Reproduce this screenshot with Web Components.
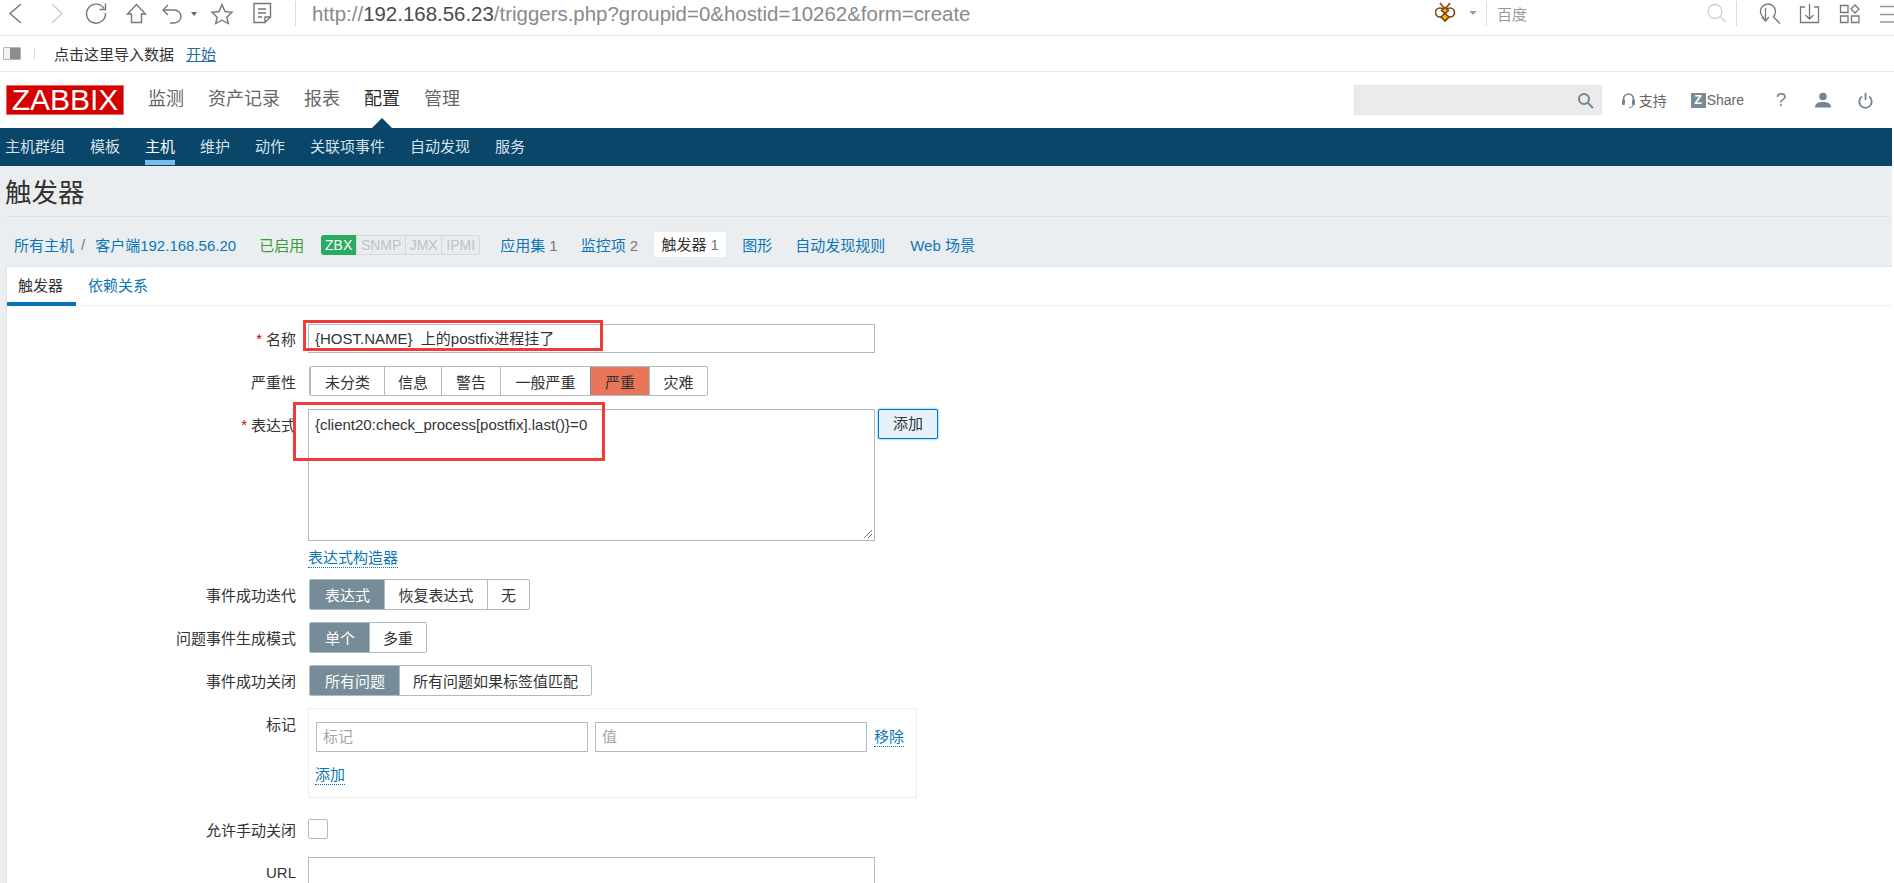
<!DOCTYPE html>
<html lang="zh">
<head>
<meta charset="utf-8">
<title>触发器</title>
<style>
    html, body { margin: 0; height: 883px; overflow: hidden; background: #fff; }
    body { font-family: "Liberation Sans", "Noto Sans CJK SC", sans-serif; font-size: 15px; color: #333; }
</style>
</head>
<body>
<browser-bar url-host="192.168.56.23" url-rest="/triggers.php?groupid=0&amp;hostid=10262&amp;form=create"></browser-bar>
<bookmark-bar></bookmark-bar>
<zbx-header></zbx-header>
<zbx-subnav></zbx-subnav>
<zbx-page>
    <h-title slot="title">触发器</h-title>
    <host-crumbs slot="crumbs"></host-crumbs>
    <zbx-panel slot="panel">
        <form-row label="名称" required top="0" height="29">
            <text-field width="567" height="29" value="{HOST.NAME}  上的postfix进程挂了"></text-field>
            <red-box left="-5" top="-4" width="300" height="31"></red-box>
        </form-row>
        <form-row label="严重性" top="13" height="30">
            <seg-group items="未分类:74,信息:57,警告:59,一般严重:90,严重:59,灾难:58" active="严重" hot></seg-group>
        </form-row>
        <form-row label="表达式" required top="13" height="132" align-top>
            <div style="display:flex;gap:3px;align-items:flex-start">
                <text-area-box width="567" height="132">{client20:check_process[postfix].last()}=0</text-area-box>
                <add-button>添加</add-button>
            </div>
            <red-box left="-15" top="-7" width="312" height="59"></red-box>
        </form-row>
        <form-row top="7" height="21"><dot-link>表达式构造器</dot-link></form-row>
        <form-row label="事件成功迭代" top="10" height="31">
            <seg-group items="表达式:74,恢复表达式:103,无:42" active="表达式"></seg-group>
        </form-row>
        <form-row label="问题事件生成模式" top="12" height="31">
            <seg-group items="单个:59,多重:57" active="单个"></seg-group>
        </form-row>
        <form-row label="事件成功关闭" top="12" height="31">
            <seg-group items="所有问题:89,所有问题如果标签值匹配:192" active="所有问题"></seg-group>
        </form-row>
        <form-row label="标记" top="12" height="90" align-top>
            <tag-box></tag-box>
        </form-row>
        <form-row label="允许手动关闭" top="21" height="20">
            <check-box></check-box>
        </form-row>
        <form-row label="URL" top="18" height="30">
            <text-field width="567" height="30" value=""></text-field>
        </form-row>
    </zbx-panel>
</zbx-page>

<script>
class BrowserBar extends HTMLElement {
    constructor() {
        super();
        this.attachShadow({ mode: 'open' });
    }

    connectedCallback() {
        const host = this.getAttribute('url-host');
        const rest = this.getAttribute('url-rest').replace(/&/g, '&amp;');
        this.shadowRoot.innerHTML = `
            <style>
                :host { display: flex; height: 36px; box-sizing: border-box; border-bottom: 1px solid #e6e6e6; align-items: flex-start; }
                svg { display: block; flex: none; }
                .url { margin: 2px 0 0 16px; font-size: 20.45px; line-height: 24px; color: #8a8a8a; white-space: nowrap; }
                .url b { font-weight: normal; color: #4a4a4a; }
                .baidu { margin: 5px 0 0 10px; width: 209px; font-size: 15px; line-height: 20px; color: #999; }
                .sep { flex: none; width: 1px; height: 25px; margin-top: 1px; background: #dcdcdc; }
                .right { margin-left: auto; display: flex; align-items: flex-start; }
            </style>
            <svg width="295" height="35" viewBox="0 0 295 35" fill="none" stroke="#777" stroke-width="1.4">
                <path d="M21 4 10 13.500 21 23"/>
                <path d="M52 4 62 13.500 52 23" stroke="#ccc"/>
                <path d="M104 8.500A9.500 9.500 0 1 0 105.500 13"/>
                <path d="M105.500 3.500V9.500H99.500"/>
                <path d="M136.500 4.500 127.500 14H131.500V22.500H141.500V14H145.500Z"/>
                <path d="M163 10H174A7 6.500 0 0 1 174 23H170"/>
                <path d="M168 5 163 10 168 15"/>
                <path d="M191 12H197L194 16Z" fill="#666" stroke="none"/>
                <path d="M222 4.500 225 11.500 232 12.300 226.800 17.200 228.300 23.500 222 20.200 215.700 23.500 217.200 17.200 212 12.300 219 11.500Z"/>
                <path d="M254 3.500H270.500V17L265 22.500H254Z"/>
                <path d="M270.500 17H265V22.500M258 9H266M258 13H266M258 17H262"/>
            </svg>
            <div class="sep"></div>
            <div class="url">http://<b>${host}</b>${rest}</div>
            <div class="right">
                <svg width="46" height="35" viewBox="0 0 46 35" style="margin-right:5px">
                    <g stroke="#7a4310" stroke-width="1.600">
                        <path d="M5 3 9 8M15 3 11 8" fill="none"/>
                        <ellipse cx="5" cy="12.500" rx="4.500" ry="4.500" fill="#fff"/>
                        <ellipse cx="15" cy="12.500" rx="4.500" ry="4.500" fill="#fff"/>
                        <path d="M10 7.500 13.500 10.500 10 13.500 6.500 10.500Z" fill="#f2b50f"/>
                        <path d="M10 13.500 14 17 10 21 6 17Z" fill="#f2b50f"/>
                    </g>
                    <path d="M34.500 11H41.500L38 15Z" fill="#999"/>
                </svg>
                <div class="sep"></div>
                <div class="baidu">百度</div>
                <svg width="22" height="35" viewBox="0 0 22 35" fill="none" stroke="#d0d0d0" stroke-width="1.3" style="margin-right:8px">
                    <circle cx="9" cy="11.500" r="7"/><path d="M14 16.500 20 22"/>
                </svg>
                <div class="sep"></div>
                <svg width="157" height="35" viewBox="0 0 157 35" fill="none" stroke="#777" stroke-width="1.3">
                    <path d="M27.250 18A7.500 7.500 0 1 1 36.300 16.800L43 23.500"/>
                    <path d="M28.500 8V21M25 17 28.500 21 32 17"/>
                    <path d="M68 7H63.500V22.500H81.500V7H77M72.500 4V19M68.500 15 72.500 19 76.500 15"/>
                    <path d="M103.500 5.500H111V12.500H103.500ZM103.500 16H111V22.500H103.500ZM114.500 16H122V22.500H114.500ZM118 5 122 9 118 13 114 9Z"/>
                    <path d="M143 6.500H160M143 14.500H160M143 22H160" stroke="#999"/>
                </svg>
            </div>
        `;
    }
}
customElements.define('browser-bar', BrowserBar);

class BookmarkBar extends HTMLElement {
    constructor() {
        super();
        this.attachShadow({ mode: 'open' });
        this.shadowRoot.innerHTML = `
            <style>
                :host { display: flex; align-items: center; height: 36px; box-sizing: border-box; border-bottom: 1px solid #e6e6e6; font-size: 15px; color: #333; }
                .toggle { width: 18px; height: 13px; margin-left: 3px; background: linear-gradient(90deg, #f2f2f2 0 38%, #8c8c8c 38%); border: 1px solid #b5b5b5; box-sizing: border-box; border-radius: 1px; }
                .sep { width: 1px; height: 12px; margin: 0 19px 0 13px; background: #ddd; }
                a { margin-left: 12px; color: #2a6aa8; text-decoration: underline; }
            </style>
            <div class="toggle"></div>
            <div class="sep"></div>
            <span>点击这里导入数据</span>
            <a>开始</a>
        `;
    }
}
customElements.define('bookmark-bar', BookmarkBar);

class ZbxHeader extends HTMLElement {
    constructor() {
        super();
        this.attachShadow({ mode: 'open' });
        this.shadowRoot.innerHTML = `
            <style>
                :host { display: flex; align-items: center; height: 56px; padding-left: 6px; margin-right: 2px; }
                .logo { width: 118px; height: 30px; box-sizing: border-box; background: #d40000; color: #fff; border: 1px solid #e66; font-size: 30px; line-height: 28px; text-align: center; }
                nav { display: flex; gap: 24px; margin: -2px 0 0 24px; font-size: 18px; line-height: 24px; color: #666; }
                nav span { position: relative; }
                nav .on { color: #2b2b2b; }
                nav .on::after { content: ''; position: absolute; left: 50%; margin-left: -10px; top: 31px; border: 10px solid transparent; border-top: 0; border-bottom-color: #0a466a; }
                .tools { margin-left: auto; display: flex; align-items: center; color: #666; font-size: 14px; }
                .search { width: 248px; height: 30px; box-sizing: border-box; background: #ebebeb; border: 1px solid #e4e4e4; display: flex; justify-content: flex-end; align-items: center; padding-right: 7px; margin-right: 20px; }
                svg { display: block; flex: none; }
                .item { display: flex; align-items: center; }
                .z { width: 15px; height: 15px; background: #768d99; color: #fff; font-weight: bold; font-size: 12.500px; line-height: 15px; text-align: center; margin-right: 1px; }
                .help { width: 16px; justify-content: center; font-size: 19px; color: #6f8693; }
            </style>
            <div class="logo">ZABBIX</div>
            <nav>
                <span>监测</span><span>资产记录</span><span>报表</span><span class="on">配置</span><span>管理</span>
            </nav>
            <div class="tools">
                <div class="search">
                    <svg width="17" height="17" viewBox="0 0 17 17" fill="none" stroke="#6f8693" stroke-width="2"><circle cx="7" cy="7" r="5"/><path d="M11 11 16 16"/></svg>
                </div>
                <div class="item" style="margin-right:24px">
                    <svg width="13" height="15" viewBox="0 0 13 15" fill="none" stroke="#6f8693" stroke-width="1.500" style="margin-right:4px"><path d="M1.500 8V6A5 5 0 0 1 11.500 6V8"/><rect x="0" y="6.500" width="3" height="5.500" rx="1" fill="#6f8693" stroke="none"/><rect x="10" y="6.500" width="3" height="5.500" rx="1" fill="#6f8693" stroke="none"/><path d="M11 12C11 14 9.500 14.500 7 14.500" stroke-width="1"/></svg>
                    <span>支持</span>
                </div>
                <div class="item" style="margin-right:29px"><span class="z">Z</span><span>Share</span></div>
                <div class="item help" style="margin-right:26px">?</div>
                <div class="item" style="margin-right:27px">
                    <svg width="16" height="16" viewBox="0 0 16 16" fill="#6f8693"><circle cx="8" cy="4.500" r="3.800"/><path d="M0 15.500C0 11 4 10 8 10S16 11 16 15.500Z"/></svg>
                </div>
                <div class="item" style="margin-right:19px">
                    <svg width="15" height="17" viewBox="0 0 15 17" fill="none" stroke="#6f8693" stroke-width="1.800"><path d="M4 4.500A6.200 6.200 0 1 0 11 4.500M7.500 1V8"/></svg>
                </div>
            </div>
        `;
    }
}
customElements.define('zbx-header', ZbxHeader);

class ZbxSubnav extends HTMLElement {
    constructor() {
        super();
        this.attachShadow({ mode: 'open' });
        const items = ['主机群组', '模板', '主机', '维护', '动作', '关联项事件', '自动发现', '服务'];
        this.shadowRoot.innerHTML = `
            <style>
                :host { display: flex; gap: 25px; height: 38px; padding-left: 5px; margin-right: 2px; background: #0a466a; color: #d7e3ea; font-size: 15px; line-height: 37px; }
                span { display: block; height: 37px; box-sizing: border-box; }
                .on { color: #fff; border-bottom: 5px solid #7abbe8; }
            </style>
            ${items.map(i => `<span class="${i === '主机' ? 'on' : ''}">${i}</span>`).join('')}
        `;
    }
}
customElements.define('zbx-subnav', ZbxSubnav);

class ZbxPage extends HTMLElement {
    constructor() {
        super();
        this.attachShadow({ mode: 'open' });
        this.shadowRoot.innerHTML = `
            <style>
                :host { display: block; background: #ebeef0; height: 717px; padding-left: 6px; overflow: hidden; margin-right: 2px; }
                .head { height: 51px; box-sizing: border-box; border-bottom: 1px solid #dfe4e7; }
            </style>
            <div class="head"><slot name="title"></slot></div>
            <slot name="crumbs"></slot>
            <slot name="panel"></slot>
        `;
    }
}
customElements.define('zbx-page', ZbxPage);

class HTitle extends HTMLElement {
    constructor() {
        super();
        this.attachShadow({ mode: 'open' });
        this.shadowRoot.innerHTML = `
            <style>
                :host { display: block; margin-left: -1px; padding-top: 4px; font-size: 26.500px; line-height: 46px; color: #333; }
            </style>
            <slot></slot>
        `;
    }
}
customElements.define('h-title', HTitle);

class HostCrumbs extends HTMLElement {
    constructor() {
        super();
        this.attachShadow({ mode: 'open' });
        this.shadowRoot.innerHTML = `
            <style>
                :host { display: flex; align-items: center; box-sizing: border-box; height: 49px; padding: 6px 0 0 8px; font-size: 15px; color: #0b76b7; white-space: nowrap; }
                .dim { color: #777; }
                .ok { color: #3c9c3a; margin: 0 17px 0 23px; }
                .av { display: flex; height: 20px; box-sizing: border-box; border: 1px solid #d3d9dd; border-radius: 3px; background: #e9ecee; color: #b9c4ca; font-size: 14px; line-height: 18px; margin-right: 20px; }
                .av span { display: block; text-align: center; border-left: 1px solid #d3d9dd; }
                .av .zbx { background: #2bab61; color: #fff; border: 0; margin: -1px 0 -1px -1px; height: 20px; line-height: 20px; border-radius: 3px 0 0 3px; }
                .cur { background: #fff; color: #333; width: 72px; height: 25px; line-height: 25px; text-align: center; border-radius: 2px; margin: 0 16px; box-shadow: 0 0 1px #d5dade; }
            </style>
            <span>所有主机</span><span class="dim" style="margin:0 10px 0 7px">/</span><span>客户端192.168.56.20</span>
            <span class="ok">已启用</span>
            <div class="av">
                <span class="zbx" style="width:35px">ZBX</span>
                <span style="width:48px">SNMP</span>
                <span style="width:35px">JMX</span>
                <span style="width:37px">IPMI</span>
            </div>
            <span>应用集 <span class="dim">1</span></span>
            <span style="margin-left:23px">监控项 <span class="dim">2</span></span>
            <span class="cur">触发器 <span class="dim">1</span></span>
            <span>图形</span>
            <span style="margin-left:23px">自动发现规则</span>
            <span style="margin-left:25px">Web 场景</span>
        `;
    }
}
customElements.define('host-crumbs', HostCrumbs);

class ZbxPanel extends HTMLElement {
    constructor() {
        super();
        this.attachShadow({ mode: 'open' });
        this.shadowRoot.innerHTML = `
            <style>
                :host { display: block; background: #fff; border: 1px solid #dfe4e7; border-width: 1px 0 0 1px; margin-top: 0; height: 640px; }
                .tabs { display: flex; height: 39px; box-sizing: border-box; border-bottom: 1px solid #ebeef0; font-size: 15px; line-height: 38px; }
                .tabs span { display: block; }
                .on { width: 69px; height: 39px; box-sizing: border-box; padding-left: 11px; color: #333; border-bottom: 4px solid #0275b8; }
                .off { margin-left: 12px; color: #0b76b7; }
                .body { padding-top: 18px; }
            </style>
            <div class="tabs"><span class="on">触发器</span><span class="off">依赖关系</span></div>
            <div class="body"><slot></slot></div>
        `;
    }
}
customElements.define('zbx-panel', ZbxPanel);

class FormRow extends HTMLElement {
    constructor() {
        super();
        this.attachShadow({ mode: 'open' });
    }

    connectedCallback() {
        const label = this.getAttribute('label') || '';
        const req = this.hasAttribute('required');
        const alignTop = this.hasAttribute('align-top');
        this.shadowRoot.innerHTML = `
            <style>
                :host { display: grid; grid-template-columns: 289px 1fr; column-gap: 12px; margin-top: ${this.getAttribute('top') || 0}px; height: ${this.getAttribute('height')}px; }
                .label { display: flex; justify-content: flex-end; align-items: center; ${alignTop ? 'height: 30px;' : ''} font-size: 15px; color: #333; white-space: nowrap; }
                .star { color: #d40000; margin-right: 4px; }
                .ctl { position: relative; }
            </style>
            <div class="label">${req ? '<span class="star">*</span>' : ''}<span>${label}</span></div>
            <div class="ctl"><slot></slot></div>
        `;
    }
}
customElements.define('form-row', FormRow);

class TextField extends HTMLElement {
    constructor() {
        super();
        this.attachShadow({ mode: 'open' });
    }

    connectedCallback() {
        const ph = this.getAttribute('placeholder');
        const text = ph || this.getAttribute('value') || '';
        this.shadowRoot.innerHTML = `<style>
                :host { display: block; box-sizing: border-box; width: ${this.getAttribute('width')}px; height: ${this.getAttribute('height')}px; border: 1px solid #acbbc4; padding: 0 6px; background: #fff; font-size: 15px; line-height: ${this.getAttribute('height') - 2}px; color: ${ph ? '#a5a5a5' : '#333'}; white-space: pre; overflow: hidden; }
            </style><span>${text}</span>`;
    }
}
customElements.define('text-field', TextField);

class TextAreaBox extends HTMLElement {
    constructor() {
        super();
        this.attachShadow({ mode: 'open' });
    }

    connectedCallback() {
        this.shadowRoot.innerHTML = `
            <style>
                :host { display: block; position: relative; flex: none; box-sizing: border-box; width: ${this.getAttribute('width')}px; height: ${this.getAttribute('height')}px; border: 1px solid #acbbc4; padding: 6px; font-size: 15px; line-height: 18px; color: #333; }
                svg { position: absolute; right: 1px; bottom: 1px; }
            </style>
            <slot></slot>
            <svg width="10" height="10" viewBox="0 0 10 10" fill="none" stroke="#777" stroke-width="1"><path d="M9 1 1 9M9 5 5 9"/></svg>
        `;
    }
}
customElements.define('text-area-box', TextAreaBox);

class AddButton extends HTMLElement {
    constructor() {
        super();
        this.attachShadow({ mode: 'open' });
        this.shadowRoot.innerHTML = `
            <style>
                :host { display: block; flex: none; box-sizing: border-box; width: 60px; height: 30px; border: 1px solid #0275b8; border-radius: 2px; background: #e5f2fb; box-shadow: 0 0 2px 1px #b6d9ef; text-align: center; font-size: 15px; line-height: 28px; color: #333; }
            </style>
            <slot></slot>
        `;
    }
}
customElements.define('add-button', AddButton);

class SegGroup extends HTMLElement {
    constructor() {
        super();
        this.attachShadow({ mode: 'open' });
    }

    connectedCallback() {
        const active = this.getAttribute('active');
        const hot = this.hasAttribute('hot');
        const items = this.getAttribute('items').split(',').map(s => s.split(':'));
        this.shadowRoot.innerHTML = `
            <style>
                :host { display: inline-flex; height: 100%; margin-left: 1px; box-sizing: border-box; border: 1px solid #acbbc4; border-radius: 2px; font-size: 15px; color: #333; overflow: hidden; }
                span { display: flex; align-items: center; justify-content: center; box-sizing: border-box; border-left: 1px solid #acbbc4; }
                span:first-child { border-left: 0; }
                .on { background: #768d99; color: #fff; border-left-color: #768d99; }
                .hot { background: #e97659; color: #333; }
            </style>
            ${items.map(([t, w]) => `<span class="${t === active ? (hot ? 'on hot' : 'on') : ''}" style="width:${w}px">${t}</span>`).join('')}
        `;
    }
}
customElements.define('seg-group', SegGroup);

class DotLink extends HTMLElement {
    constructor() {
        super();
        this.attachShadow({ mode: 'open' });
        this.shadowRoot.innerHTML = `
            <style>
                :host { display: inline-block; font-size: 15px; line-height: 19px; color: #0b76b7; border-bottom: 1px dotted #0b76b7; }
            </style>
            <slot></slot>
        `;
    }
}
customElements.define('dot-link', DotLink);

class TagBox extends HTMLElement {
    constructor() {
        super();
        this.attachShadow({ mode: 'open' });
        this.shadowRoot.innerHTML = `
            <style>
                :host { display: block; box-sizing: border-box; width: 609px; height: 90px; border: 1px solid #ebeef0; padding: 13px 7px 0; }
                .line { display: flex; align-items: center; gap: 7px; }
                .add { margin-top: 13px; }
                dot-link { margin-left: -1px; }
            </style>
            <div class="line">
                <text-field width="272" height="30" placeholder="标记"></text-field>
                <text-field width="272" height="30" placeholder="值"></text-field>
                <dot-link style="margin:0">移除</dot-link>
            </div>
            <div class="add"><dot-link>添加</dot-link></div>
        `;
    }
}
customElements.define('tag-box', TagBox);

class CheckBox extends HTMLElement {
    constructor() {
        super();
        this.attachShadow({ mode: 'open' });
        this.shadowRoot.innerHTML = `
            <style>
                :host { display: block; box-sizing: border-box; width: 20px; height: 20px; border: 1px solid #acbbc4; border-radius: 2px; background: #fff; }
            </style>
        `;
    }
}
customElements.define('check-box', CheckBox);

class RedBox extends HTMLElement {
    constructor() {
        super();
        this.attachShadow({ mode: 'open' });
    }

    connectedCallback() {
        this.shadowRoot.innerHTML = `
            <style>
                :host { position: absolute; left: ${this.getAttribute('left')}px; top: ${this.getAttribute('top')}px; width: ${this.getAttribute('width')}px; height: ${this.getAttribute('height')}px; box-sizing: border-box; border: 3px solid #f23a3a; pointer-events: none; }
            </style>
        `;
    }
}
customElements.define('red-box', RedBox);
</script>
</body>
</html>
